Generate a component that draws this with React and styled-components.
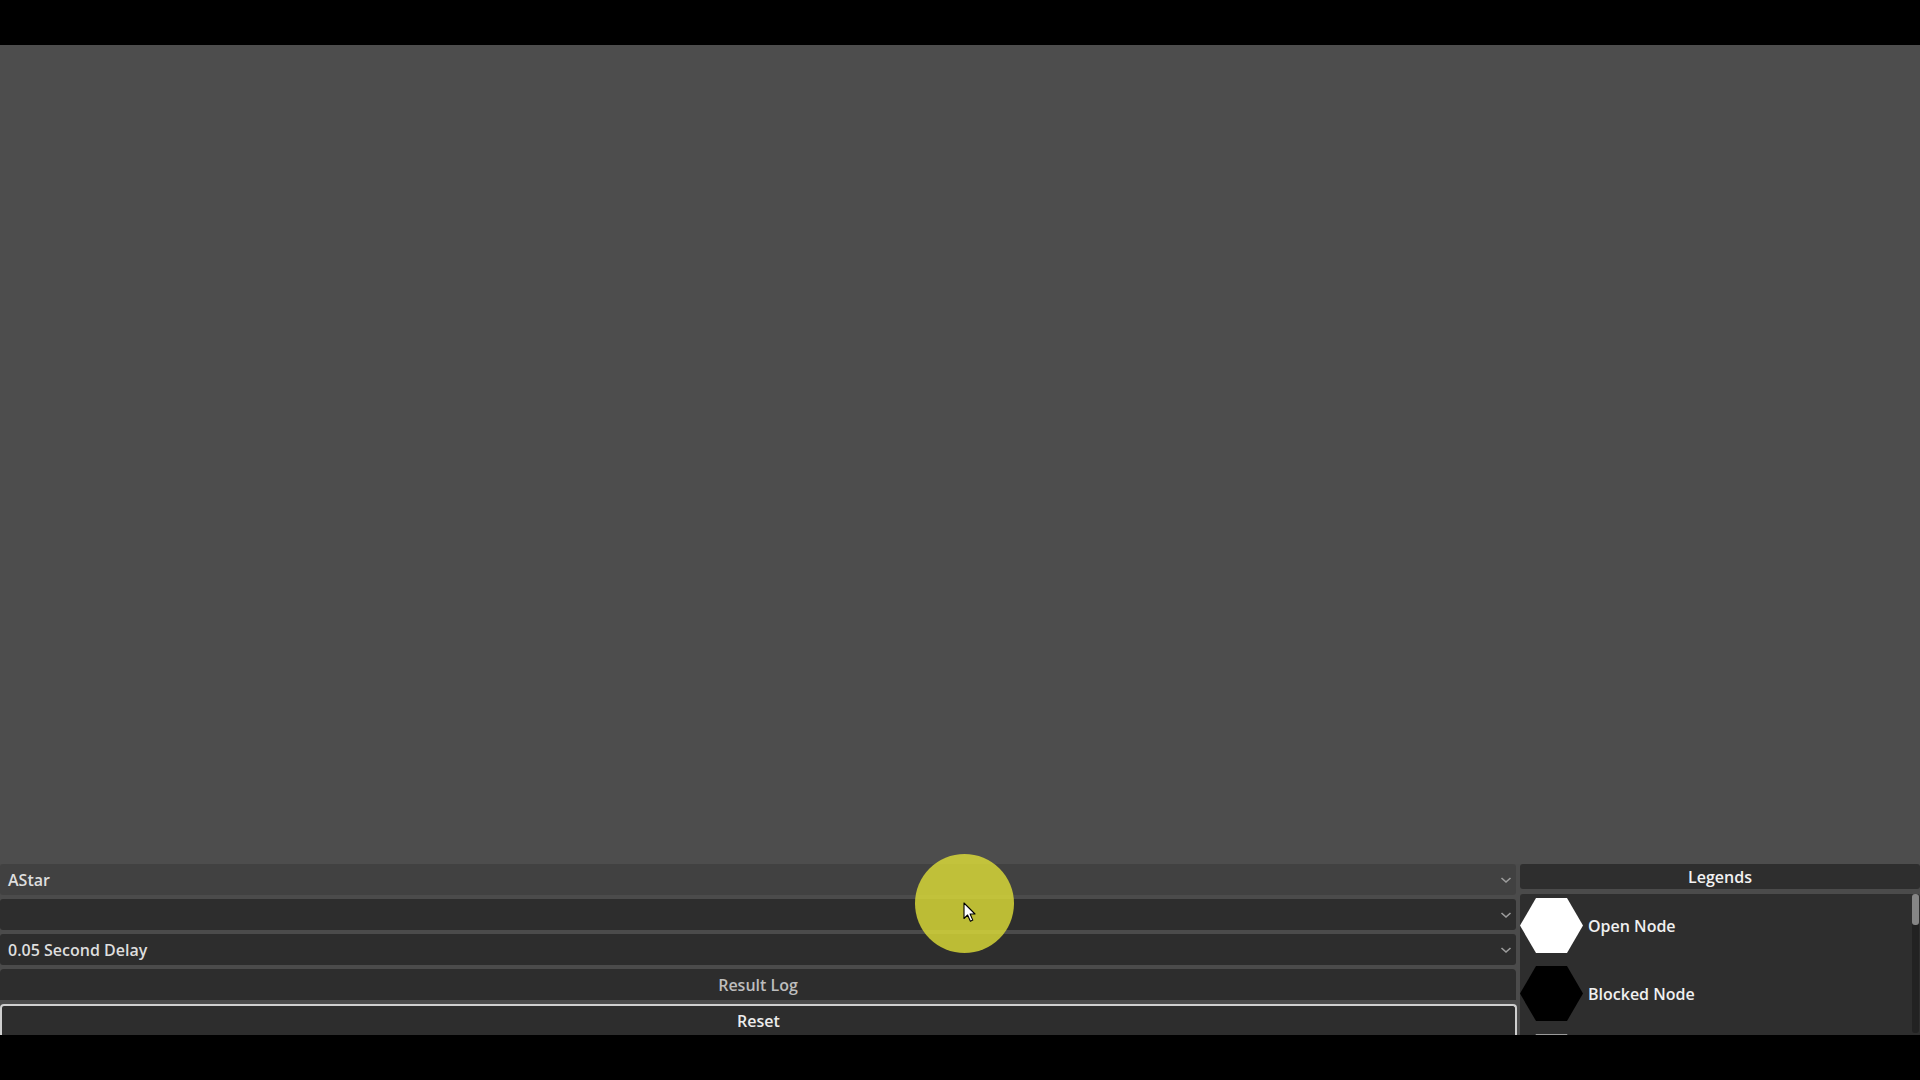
import React from "react";
import styled, { createGlobalStyle } from "styled-components";

const GlobalStyle = createGlobalStyle`
  html, body {
    margin: 0;
    padding: 0;
    background: #000;
  }
  body {
    font-family: "Open Sans", "Noto Sans", sans-serif;
    font-weight: 600;
    font-size: 16px;
  }
`;

const Screen = styled.div`
  position: relative;
  width: 1920px;
  height: 1080px;
  display: flex;
  flex-direction: column;
  background: #000;
  overflow: hidden;
`;

const Letterbox = styled.div`
  height: 45px;
  flex: none;
  background: #000;
`;

const Canvas = styled.div`
  height: 819px;
  flex: none;
  background: #4d4d4d;
`;

const Controls = styled.div`
  height: 171px;
  flex: none;
  display: grid;
  grid-template-columns: 1517px 400px;
  grid-template-rows: 171px;
  column-gap: 3px;
  background: #4b4b4b;
  overflow: hidden;
`;

const LeftColumn = styled.div`
  display: flex;
  flex-direction: column;
  gap: 4px;
`;

const Dropdown = styled.div`
  height: 31px;
  display: flex;
  align-items: center;
  justify-content: space-between;
  padding: 0 4px 0 8px;
  box-sizing: border-box;
  width: 1516px;
  border-radius: 3px;
  background: ${(p) => (p.$hover ? "#414141" : "#2d2d2d")};
  color: #dedede;
`;

const Chevron = styled.svg`
  width: 12px;
  height: 8px;
`;

const Button = styled.div`
  height: 31px;
  width: ${(p) => (p.$focus ? "1517px" : "1516px")};
  box-sizing: border-box;
  display: flex;
  align-items: center;
  justify-content: center;
  border-radius: 4px;
  background: #2d2d2d;
  color: ${(p) => (p.$focus ? "#ececec" : "#bdbdbd")};
  border: ${(p) => (p.$focus ? "2px solid #cfcfcf" : "none")};
  border-bottom: none;
  border-bottom-left-radius: 0;
  border-bottom-right-radius: 0;
  padding-top: ${(p) => (p.$focus ? "1px" : "0")};
`;

const RightColumn = styled.div`
  display: flex;
  flex-direction: column;
  gap: 5px;
  min-height: 0;
  overflow: hidden;
`;

const LegendHeader = styled.div`
  height: 25px;
  flex: none;
  display: flex;
  align-items: center;
  justify-content: center;
  background: #2e2e2e;
  border-radius: 3px;
  color: #f2f2f2;
`;

const LegendPanel = styled.div`
  flex: 1;
  min-height: 0;
  background: #2e2e2e;
  border-radius: 3px 3px 0 0;
  overflow: hidden;
  display: flex;
`;

const LegendList = styled.div`
  flex: 1;
  display: flex;
  flex-direction: column;
  gap: 13px;
  padding-top: 4px;
  overflow: hidden;
`;

const LegendItem = styled.div`
  display: flex;
  align-items: center;
  gap: 5px;
  height: 55px;
  flex: none;
  color: #f0f0f0;
`;

const Hex = styled.svg`
  width: 63px;
  height: 55px;
  flex: none;
`;

const ScrollTrack = styled.div`
  width: 7px;
  flex: none;
  margin-right: 1px;
  margin-bottom: 2px;
  background: #222;
  border-radius: 3px;
  display: flex;
  flex-direction: column;
`;

const ScrollThumb = styled.div`
  height: 31px;
  background: #858585;
  border-radius: 3px;
`;

const ClickIndicator = styled.div`
  position: absolute;
  left: 915px;
  top: 854px;
  width: 99px;
  height: 99px;
  border-radius: 50%;
  background: rgba(228, 228, 55, 0.78);
  pointer-events: none;
`;

const Cursor = styled.svg`
  position: absolute;
  left: 963px;
  top: 902px;
  width: 14px;
  height: 21px;
`;

// third entry is scrolled out of view, only its top edge shows
const legends = [
  { label: "Open Node", fill: "#ffffff" },
  { label: "Blocked Node", fill: "#000000" },
  { label: "", fill: "#9a9a9a" },
];

function ChevronIcon() {
  return (
    <Chevron viewBox="0 0 12 8">
      <path d="M1.5 2 L6 6 L10.5 2" fill="none" stroke="#9c9c9c" strokeWidth="1.6" />
    </Chevron>
  );
}

function Hexagon({ fill }) {
  return (
    <Hex viewBox="0 0 63 55">
      <polygon points="0,27.5 16,0 47,0 63,27.5 47,55 16,55" fill={fill} />
    </Hex>
  );
}

export default function App() {
  return (
    <>
      <GlobalStyle />
      <Screen>
        <Letterbox />
        <Canvas />
        <Controls>
          <LeftColumn>
            <Dropdown $hover>
              <span>AStar</span>
              <ChevronIcon />
            </Dropdown>
            <Dropdown>
              <span></span>
              <ChevronIcon />
            </Dropdown>
            <Dropdown>
              <span>0.05 Second Delay</span>
              <ChevronIcon />
            </Dropdown>
            <Button>Result Log</Button>
            <Button $focus>Reset</Button>
          </LeftColumn>
          <RightColumn>
            <LegendHeader>Legends</LegendHeader>
            <LegendPanel>
              <LegendList>
                {legends.map((l, i) => (
                  <LegendItem key={i}>
                    <Hexagon fill={l.fill} />
                    {l.label && <span>{l.label}</span>}
                  </LegendItem>
                ))}
              </LegendList>
              <ScrollTrack>
                <ScrollThumb />
              </ScrollTrack>
            </LegendPanel>
          </RightColumn>
        </Controls>
        <Letterbox />
        <ClickIndicator />
        <Cursor viewBox="0 0 14 21">
          <path
            d="M1 1 L1 16.5 L4.6 13 L7.4 19.2 L9.8 18.1 L7.1 12 L12 12 Z"
            fill="#fff"
            stroke="#000"
            strokeWidth="1.1"
            strokeLinejoin="round"
          />
        </Cursor>
      </Screen>
    </>
  );
}
